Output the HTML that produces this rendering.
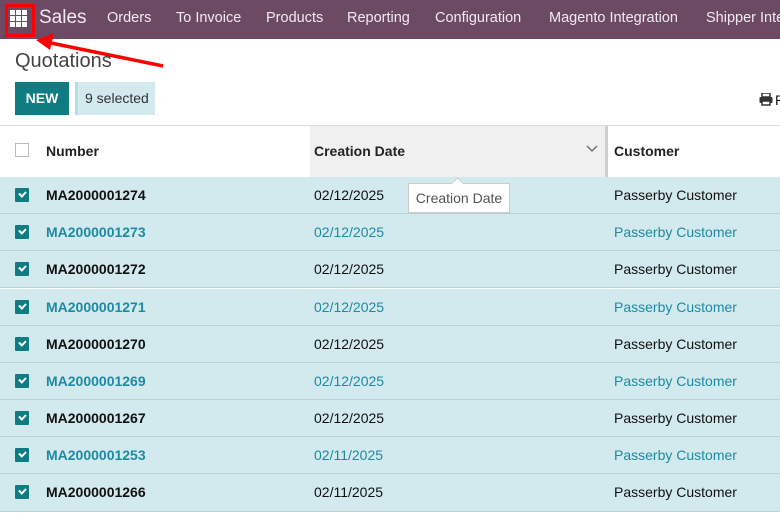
<!DOCTYPE html>
<html><head><meta charset="utf-8"><style>
*{margin:0;padding:0;box-sizing:border-box}
body{width:780px;height:517px;overflow:hidden;background:#fff;font-family:"Liberation Sans","DejaVu Sans",sans-serif;position:relative;color:#111}
.nav{position:absolute;left:0;top:0;width:780px;height:39px;background:#6d4a63;color:#fff;font-size:14.5px}
.nav span{position:absolute;top:10px;white-space:nowrap;color:#f1eaf0}
.abs{position:absolute;white-space:nowrap}
.row{position:absolute;left:0;width:780px;height:37px;background:#d2e9ee;border-bottom:1px solid #b4d3da;font-size:14px}
.row .t{position:absolute;top:10px}
.cb{position:absolute;left:15px;top:11px;width:14px;height:14px;background:#0e7c80;border-radius:1px}
.cb:after{content:"";position:absolute;left:4px;top:3px;width:5px;height:3px;border-left:2px solid #fff;border-bottom:2px solid #fff;transform:rotate(-45deg)}
.b{font-weight:bold}
.l{color:#1d8aa3}
</style></head><body>
<div class="nav">
 <div style="position:absolute;left:5px;top:4px;width:30px;height:33px;border:3px solid #f00"></div>
 <svg style="position:absolute;left:10px;top:10px" width="17" height="17" viewBox="0 0 17 17" fill="#fff"><rect x="0" y="0" width="5" height="5"/><rect x="6" y="0" width="5" height="5"/><rect x="12" y="0" width="5" height="5"/><rect x="0" y="6" width="5" height="5"/><rect x="6" y="6" width="5" height="5"/><rect x="12" y="6" width="5" height="5"/><rect x="0" y="12" width="5" height="5"/><rect x="6" y="12" width="5" height="5"/><rect x="12" y="12" width="5" height="5"/></svg>
 <span style="left:39px;top:7px;font-size:19px">Sales</span>
 <span style="left:107px">Orders</span>
 <span style="left:176px">To Invoice</span>
 <span style="left:266px">Products</span>
 <span style="left:347px">Reporting</span>
 <span style="left:435px">Configuration</span>
 <span style="left:549px">Magento Integration</span>
 <span style="left:706px">Shipper Inte</span>
</div>
<svg class="abs" style="left:0;top:0" width="780" height="120"><line x1="163" y1="66" x2="46" y2="42" stroke="#f00" stroke-width="3.5"/><polygon points="36,40 54,33 50,50" fill="#f00"/></svg>
<div class="abs" style="left:15px;top:50px;font-size:20px;color:#444">Quotations</div>
<div class="abs" style="left:15px;top:82px;width:54px;height:33px;background:#0e7c80;color:#fff;font-weight:bold;font-size:14px;text-align:center;line-height:33px">NEW</div>
<div class="abs" style="left:75px;top:82px;width:80px;height:33px;background:#d2e9ee;border-left:3px solid #b6dde6;font-size:14px;color:#333;line-height:33px;padding-left:7px">9 selected</div>
<svg class="abs" style="left:759px;top:93px" width="14" height="13" viewBox="0 0 14 13"><rect x="3" y="0" width="8" height="4" fill="none" stroke="#333" stroke-width="1.5"/><rect x="0.5" y="4" width="13" height="6" rx="1" fill="#333"/><rect x="3" y="8" width="8" height="4" fill="#fff" stroke="#333" stroke-width="1.5"/></svg>
<div class="abs" style="left:775px;top:92px;font-size:14px">R</div>
<div class="abs" style="left:0;top:125px;width:780px;height:1px;background:#ddd"></div>
<div class="abs" style="left:310px;top:126px;width:295px;height:51px;background:#f0f0f0"></div>
<div class="abs" style="left:605px;top:126px;width:3px;height:51px;background:#cfcfcf"></div>
<div class="abs" style="left:15px;top:143px;width:14px;height:14px;border:1px solid #bbb;background:#fff"></div>
<div class="abs b" style="left:46px;top:143px;font-size:14px;color:#222">Number</div>
<div class="abs b" style="left:314px;top:143px;font-size:14px;color:#222">Creation Date</div>
<svg class="abs" style="left:586px;top:145px" width="12" height="8"><polyline points="1,1 6,6 11,1" fill="none" stroke="#666" stroke-width="1.3"/></svg>
<div class="abs b" style="left:614px;top:143px;font-size:14px;color:#222">Customer</div>

<div class="row" style="top:177px"><div class="cb"></div><div class="t b" style="left:46px">MA2000001274</div><div class="t" style="left:314px">02/12/2025</div><div class="t" style="left:614px">Passerby Customer</div></div>
<div class="row l" style="top:214px"><div class="cb"></div><div class="t b" style="left:46px">MA2000001273</div><div class="t" style="left:314px">02/12/2025</div><div class="t" style="left:614px">Passerby Customer</div></div>
<div class="row" style="top:251px"><div class="cb"></div><div class="t b" style="left:46px">MA2000001272</div><div class="t" style="left:314px">02/12/2025</div><div class="t" style="left:614px">Passerby Customer</div></div>
<div class="row l" style="top:289px"><div class="cb"></div><div class="t b" style="left:46px">MA2000001271</div><div class="t" style="left:314px">02/12/2025</div><div class="t" style="left:614px">Passerby Customer</div></div>
<div class="row" style="top:326px"><div class="cb"></div><div class="t b" style="left:46px">MA2000001270</div><div class="t" style="left:314px">02/12/2025</div><div class="t" style="left:614px">Passerby Customer</div></div>
<div class="row l" style="top:363px"><div class="cb"></div><div class="t b" style="left:46px">MA2000001269</div><div class="t" style="left:314px">02/12/2025</div><div class="t" style="left:614px">Passerby Customer</div></div>
<div class="row" style="top:400px"><div class="cb"></div><div class="t b" style="left:46px">MA2000001267</div><div class="t" style="left:314px">02/12/2025</div><div class="t" style="left:614px">Passerby Customer</div></div>
<div class="row l" style="top:437px"><div class="cb"></div><div class="t b" style="left:46px">MA2000001253</div><div class="t" style="left:314px">02/11/2025</div><div class="t" style="left:614px">Passerby Customer</div></div>
<div class="row" style="top:474px;height:38px"><div class="cb"></div><div class="t b" style="left:46px">MA2000001266</div><div class="t" style="left:314px">02/11/2025</div><div class="t" style="left:614px">Passerby Customer</div></div>

<div class="abs" style="left:408px;top:183px;width:102px;height:30px;background:#fff;border:1px solid #ccc;font-size:14px;color:#555;line-height:28px;text-align:center">Creation Date</div>
<div class="abs" style="left:453px;top:179px;width:9px;height:9px;background:#fff;border-left:1px solid #ccc;border-top:1px solid #ccc;transform:rotate(45deg)"></div>
</body></html>
